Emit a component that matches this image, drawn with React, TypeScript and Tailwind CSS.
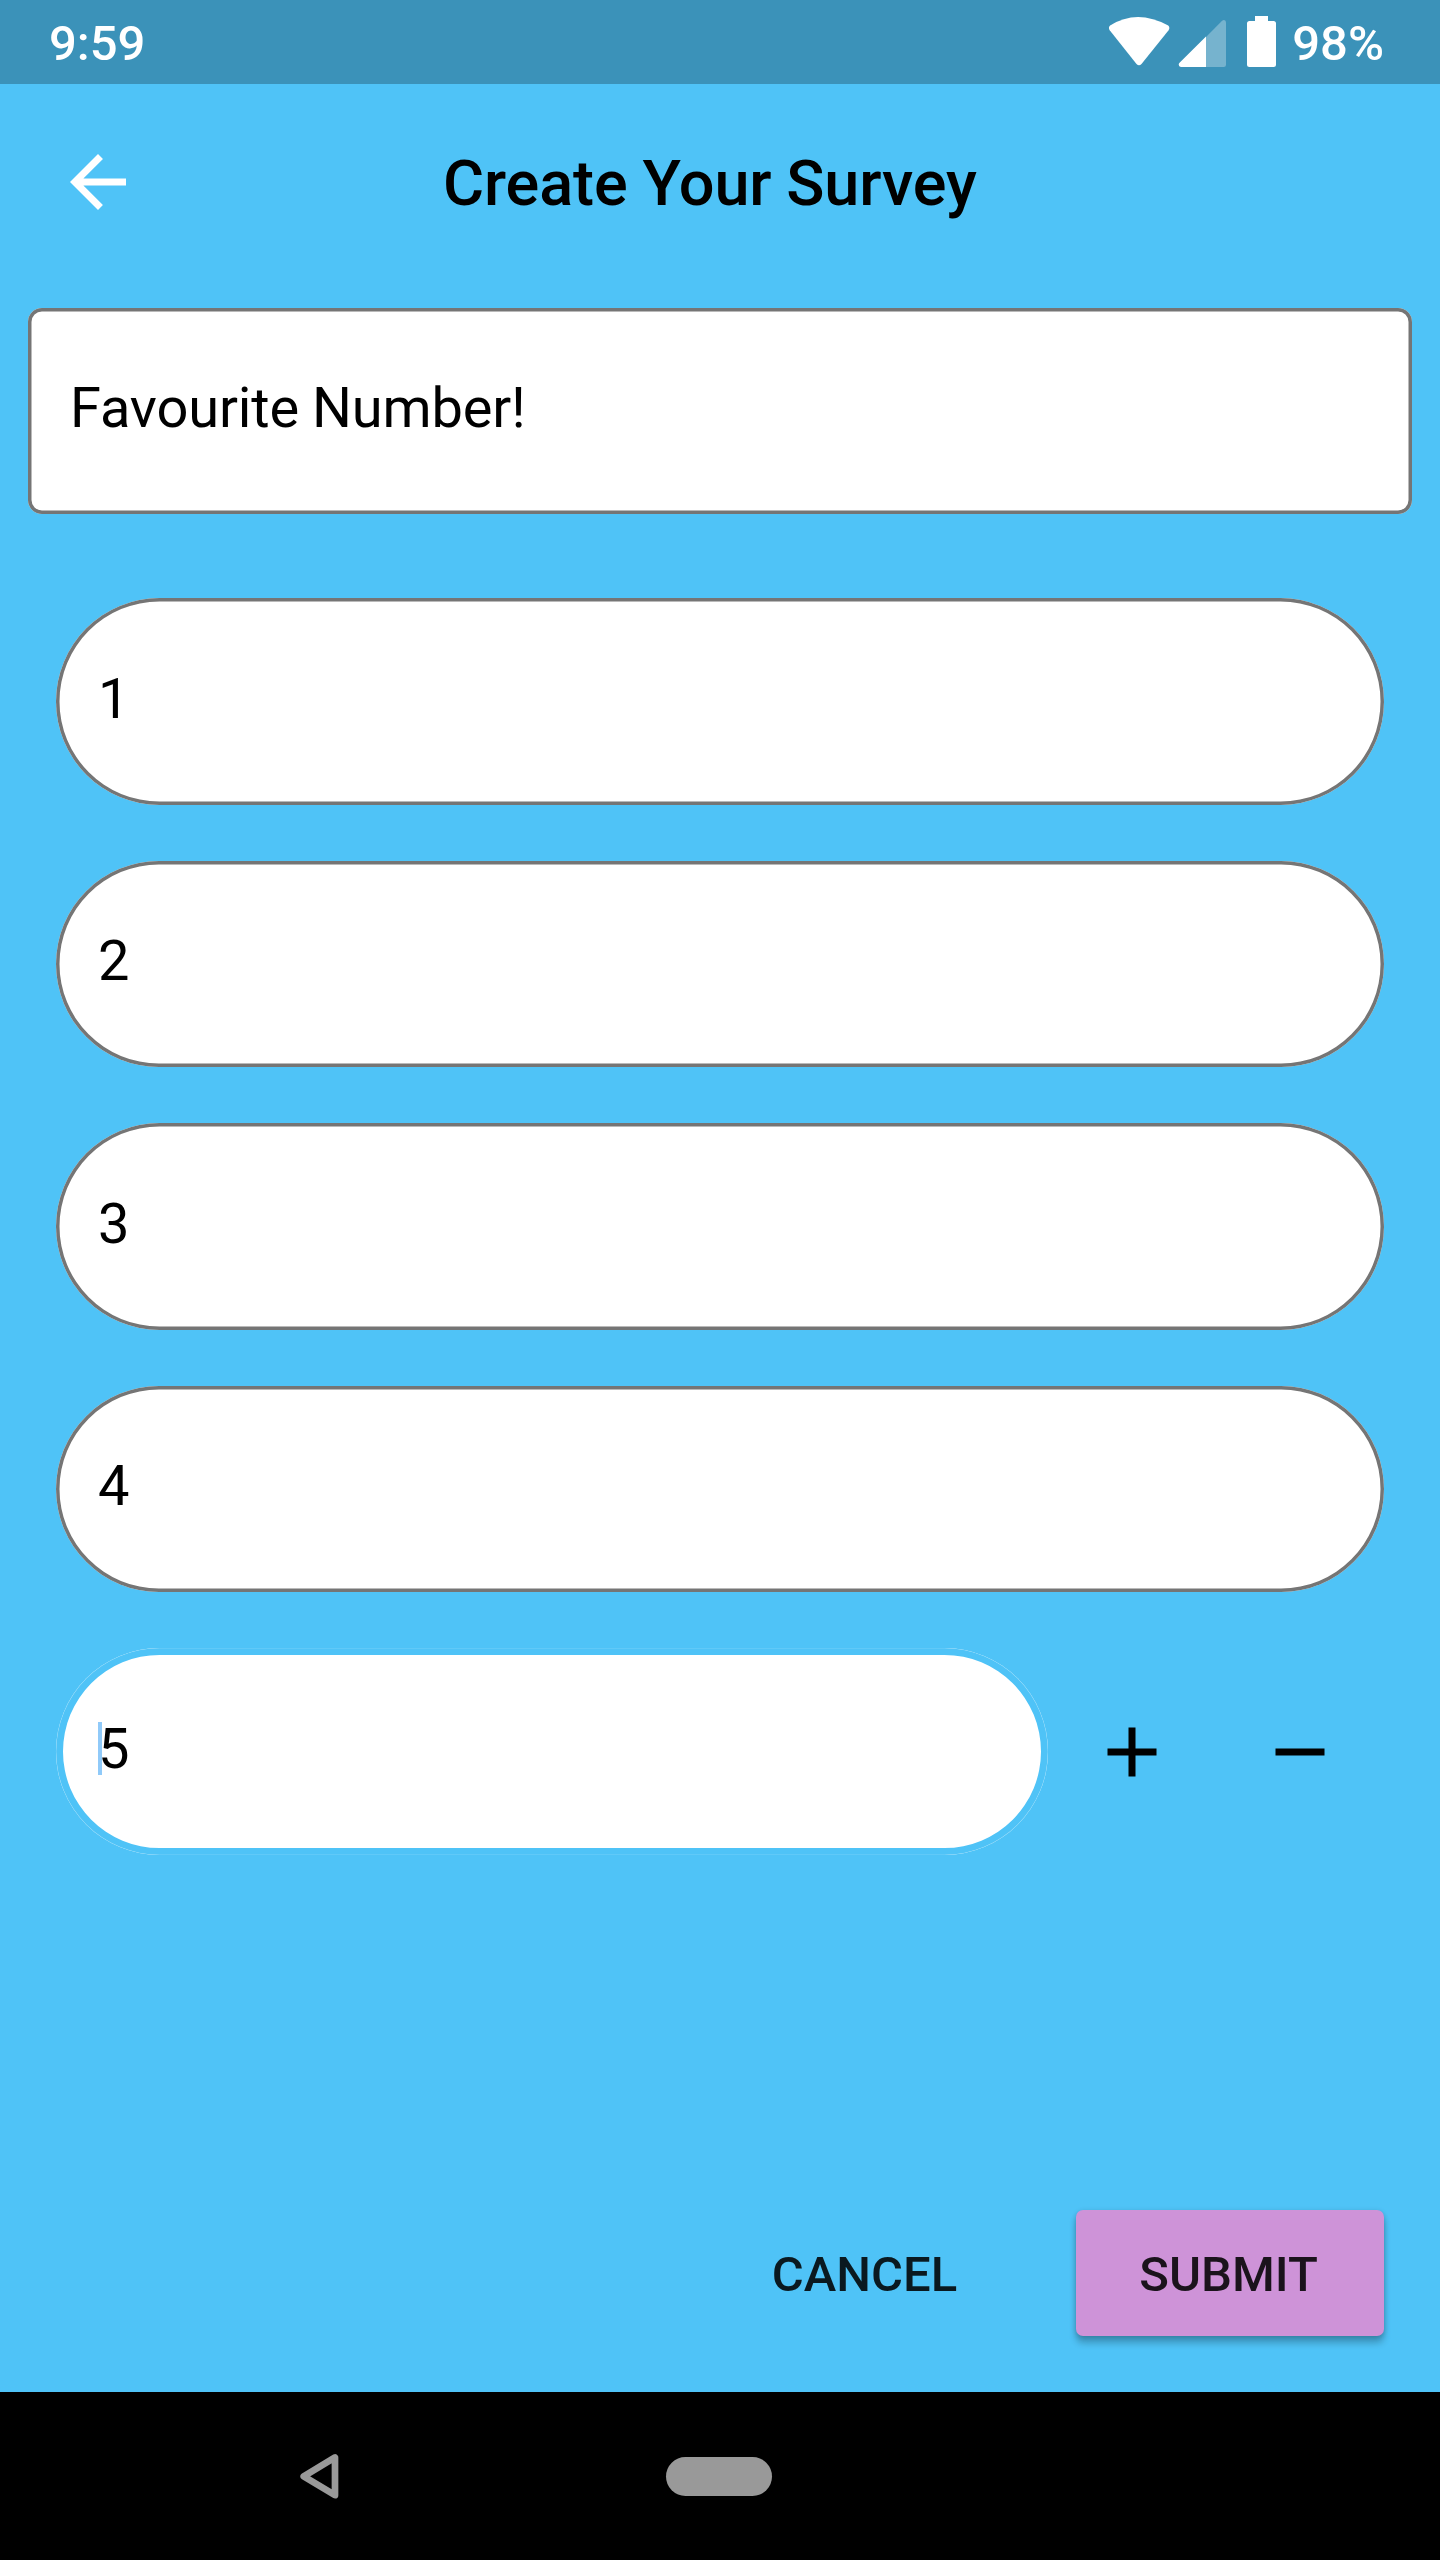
import React from "react";

const options = ["1", "2", "3", "4"];

function StatusBar() {
  return (
    <header className="flex h-[84px] items-center justify-between bg-[#3b92b9] pr-[56px] pl-[49px] text-[49px] leading-[84px] font-medium text-white">
      <span className="relative top-[2px]">9:59</span>
      <div className="flex h-full items-center">
        <svg className="h-[84px] w-[184px]" viewBox="1108 0 184 84" fill="#fff">
          <path d="M1110.1 25.6 Q1137 8.6 1168.2 25.6 Q1170.3 27.7 1168.6 30.2 L1141.5 64 Q1139 66.6 1136.5 64 L1109.7 30.2 Q1108 27.7 1110.1 25.6Z" />
          <path
            fillOpacity="0.3"
            d="M1206 37 L1221.6 21.2 Q1223 20 1224 20 Q1226 20 1226 22.5 V64.8 Q1226 67 1223.8 67 H1206Z"
          />
          <path d="M1206 36.6 V67 H1181 Q1178.7 67 1178.7 64.6 Q1178.7 63.6 1179.8 62.6Z" />
          <path d="M1255 16 H1268 V21 H1273.5 Q1276 21 1276 23.5 V64.5 Q1276 67 1273.5 67 H1249.5 Q1247 67 1247 64.5 V23.5 Q1247 21 1249.5 21 H1255Z" />
        </svg>
        <span className="relative top-[2px]">98%</span>
      </div>
    </header>
  );
}

function AppBar() {
  return (
    <div className="flex h-[196px] items-center px-[56px]">
      <svg className="size-[84px] shrink-0" viewBox="0 0 24 24" fill="#fff">
        <path d="M20 11H7.83l5.59-5.59L12 4l-8 8 8 8 1.41-1.41L7.83 13H20v-2z" />
      </svg>
      <h1 className="relative top-[2px] ml-[303px] text-[63px] leading-[84px] font-medium tracking-[-0.1px] whitespace-nowrap text-black [word-spacing:-0.8px]">
        Create Your Survey
      </h1>
    </div>
  );
}

function OptionField({ value }: { value: string }) {
  return (
    <div className="flex h-[206.5px] items-center rounded-full bg-white px-[42px] text-[56px] leading-[66px] shadow-[inset_0_0_0_3.5px_#757575]">
      <span className="relative -top-[3px]">{value}</span>
    </div>
  );
}

export default function App() {
  return (
    <div className="flex h-[2560px] w-[1440px] flex-col overflow-hidden bg-[#4fc3f7] font-['Roboto',sans-serif] text-black">
      <StatusBar />
      <AppBar />
      <main className="flex flex-1 flex-col pt-[28px]">
        <div className="mx-[28px] flex h-[206.4px] items-center rounded-[14px] bg-white px-[42px] text-[56px] leading-[66px] shadow-[inset_0_0_0_3.5px_#757575]">
          <span className="relative -top-[3px] tracking-[-0.12px] [word-spacing:-1px]">Favourite Number!</span>
        </div>

        <div className="mx-[56px] mt-[84px] flex flex-col gap-[56px]">
          {options.map((o) => (
            <OptionField key={o} value={o} />
          ))}
          <div className="flex h-[206.5px] items-center">
            <div className="flex h-full w-[992px] items-center rounded-full bg-white px-[42px] text-[56px] leading-[66px] shadow-[inset_0_0_0_0.3px_#95daf9,inset_0_0_0_7px_#4fc3f7]">
              <span className="relative -top-[3px]">
                <span className="absolute top-[6px] left-0 h-[53px] w-[4px] bg-[#90caf9]" />
                <span className="relative">5</span>
              </span>
            </div>
            <svg className="ml-[42px] size-[84px]" viewBox="0 0 24 24">
              <path d="M19 13h-6v6h-2v-6H5v-2h6V5h2v6h6v2z" />
            </svg>
            <svg className="ml-[84px] size-[84px]" viewBox="0 0 24 24">
              <path d="M19 13H5v-2h14v2z" />
            </svg>
          </div>
        </div>

        <div className="mt-auto mr-[56px] mb-[56px] flex justify-end gap-[56px] text-[49px] leading-[130px] font-medium text-black/87">
          <button className="h-[126px] w-[308px] pr-[3px]">CANCEL</button>
          <button className="h-[126px] w-[308px] rounded-[7px] bg-[#ce93d8] pr-[3px] shadow-[0_7px_7px_rgba(0,0,0,0.24),0_1px_5px_rgba(0,0,0,0.16)]">
            SUBMIT
          </button>
        </div>
      </main>

      <nav className="flex h-[168px] items-center bg-black pl-[296px]">
        <svg className="h-[48px] w-[48px]" viewBox="296 2452 48 48" fill="none">
          <path
            d="M303.7 2476.3 L335 2457.4 V2495.2Z"
            stroke="#999"
            strokeWidth="6.7"
            strokeLinejoin="round"
          />
        </svg>
        <span className="ml-[322px] h-[39px] w-[106px] rounded-full bg-[#999]" />
      </nav>
    </div>
  );
}
